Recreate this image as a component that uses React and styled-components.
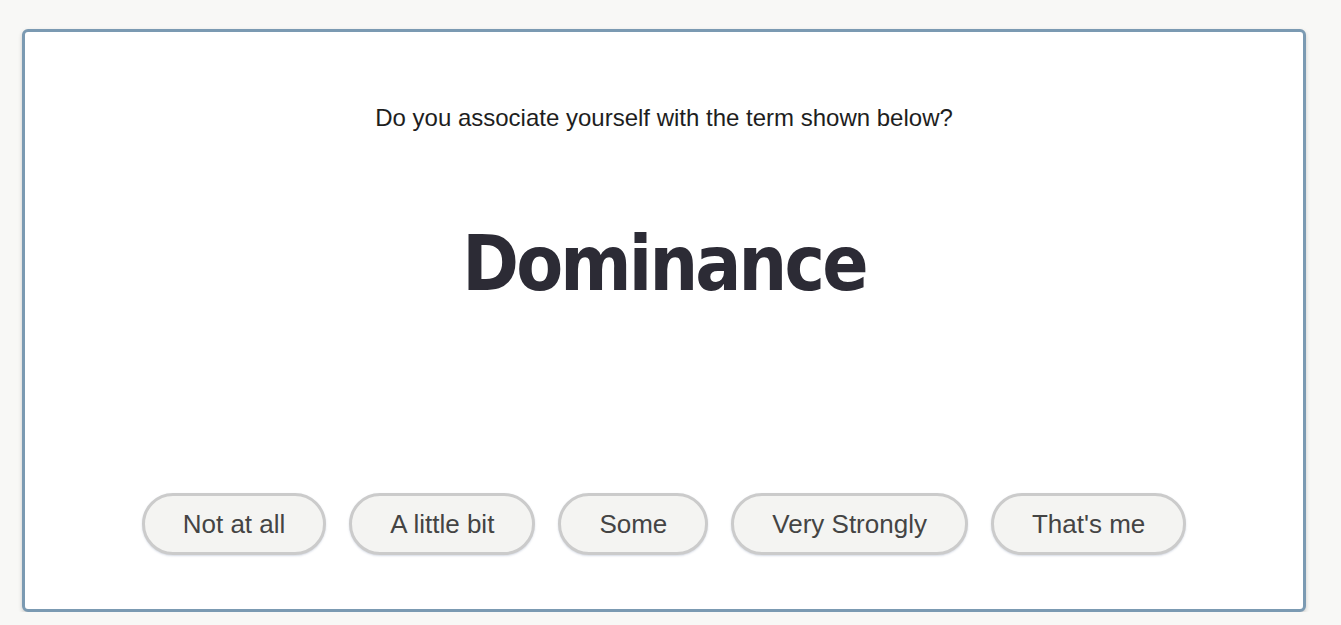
import React from "react";
import styled, { createGlobalStyle } from "styled-components";

const Global = createGlobalStyle`
  html, body { margin: 0; padding: 0; background: #f8f8f6; }
  body { font-family: "Liberation Sans", Arial, sans-serif; }
`;

const Page = styled.div`
  padding: 29px 35px 0 22px;
`;

const Card = styled.div`
  box-sizing: border-box;
  width: 1284px;
  height: 583px;
  background: #ffffff;
  border: 3px solid #7b9ab2;
  border-radius: 6px;
  box-shadow: 0 2px 4px rgba(0, 0, 0, 0.18);
  display: flex;
  flex-direction: column;
  align-items: center;
  padding-top: 72px;
`;

const Question = styled.p`
  margin: 0;
  font-size: 24px;
  line-height: 28px;
  color: #1e1e1e;
`;

const Term = styled.h1`
  margin: 87px 0 0;
  font-family: "DejaVu Sans", Verdana, sans-serif;
  font-stretch: condensed;
  font-weight: bold;
  font-size: 76px;
  line-height: 90px;
  letter-spacing: -2.8px;
  color: #2c2b35;
`;

const Options = styled.div`
  margin-top: auto;
  margin-bottom: 54px;
  display: flex;
  gap: 23px;
`;

const Option = styled.button`
  box-sizing: border-box;
  height: 62px;
  padding: 0 38px;
  border: 3px solid #cbcbcb;
  border-radius: 31px;
  background: #f4f4f2;
  box-shadow: 0 1px 2px rgba(90, 110, 150, 0.25);
  font-family: "Liberation Sans", Arial, sans-serif;
  font-size: 26px;
  color: #444444;
  cursor: pointer;
`;

const options = ["Not at all", "A little bit", "Some", "Very Strongly", "That's me"];

export default function App() {
  return (
    <>
      <Global />
      <Page>
        <Card>
          <Question>Do you associate yourself with the term shown below?</Question>
          <Term>Dominance</Term>
          <Options>
            {options.map((o) => (
              <Option key={o}>{o}</Option>
            ))}
          </Options>
        </Card>
      </Page>
    </>
  );
}
